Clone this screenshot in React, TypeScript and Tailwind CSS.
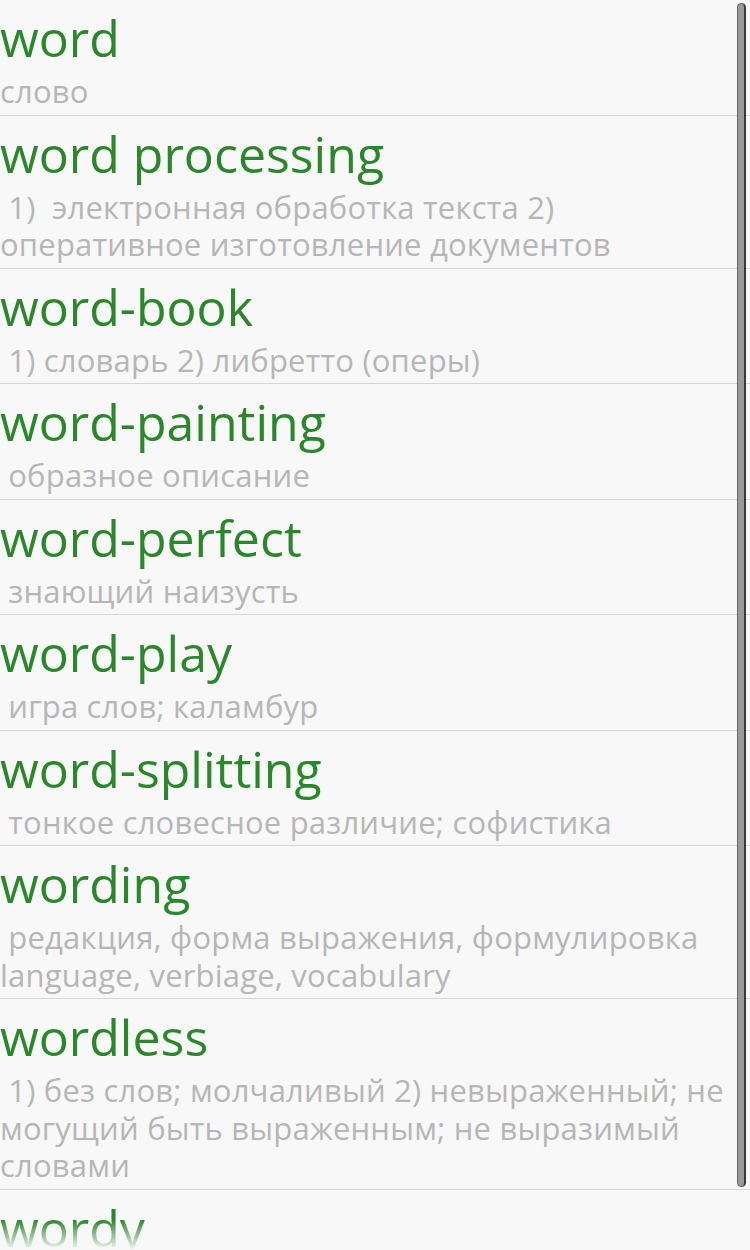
const entries: { word: string; lines: string[] }[] = [
  { word: 'word', lines: ['слово'] },
  {
    word: 'word processing',
    lines: [' 1)  электронная обработка текста 2)', 'оперативное изготовление документов'],
  },
  { word: 'word-book', lines: [' 1) словарь 2) либретто (оперы)'] },
  { word: 'word-painting', lines: [' образное описание'] },
  { word: 'word-perfect', lines: [' знающий наизусть'] },
  { word: 'word-play', lines: [' игра слов; каламбур'] },
  { word: 'word-splitting', lines: [' тонкое словесное различие; софистика'] },
  {
    word: 'wording',
    lines: [' редакция, форма выражения, формулировка', 'language, verbiage, vocabulary'],
  },
  {
    word: 'wordless',
    lines: [
      ' 1) без слов; молчаливый 2) невыраженный; не',
      'могущий быть выраженным; не выразимый',
      'словами',
    ],
  },
  { word: 'wordy', lines: [' многословный'] },
];

const App = () => {
  return (
    <div
      className="relative h-[1250px] w-[750px] overflow-hidden bg-[#f8f8f8]"
      style={{ fontFamily: '"Open Sans", "Noto Sans", sans-serif' }}
    >
      <ul className="flex flex-col">
        {entries.map((entry) => (
          <li key={entry.word} className="border-b border-[#d6d6d6] pt-[10px] pb-[4px]">
            <div className="text-[50px] leading-[56px] text-[#2a882a]">{entry.word}</div>
            <div className="mt-[7px] whitespace-pre text-[31px] leading-[37.5px] tracking-[0.2px] text-[#b6b6b6]">
              {entry.lines.map((line) => (
                <div key={line}>{line}</div>
              ))}
            </div>
          </li>
        ))}
      </ul>

      {/* scrollbar */}
      <div className="absolute top-[3px] left-[737px] h-[1184px] w-[9px] rounded-full border border-[#666] border-r-2 border-r-[#3a3a3a] bg-[#9a9a9a]" />

      {/* bottom fade */}
      <div className="absolute right-0 bottom-0 left-0 h-[30px] bg-gradient-to-b from-[#f8f8f8]/0 to-[#f8f8f8]" />
    </div>
  );
};

export default App;
